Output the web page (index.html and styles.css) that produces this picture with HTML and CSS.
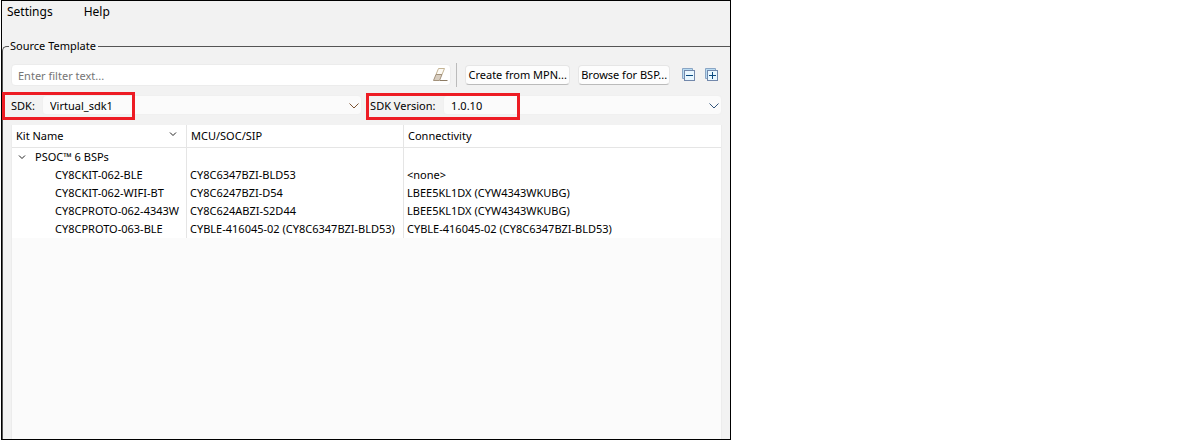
FILE: index.html
```html
<!DOCTYPE html>
<html lang="en">
  <head>
    <meta charset="UTF-8" />
    <title>Project Creator - Choose Board Support Package</title>
    <meta name="viewport" content="width=device-width, initial-scale=1.0" />
    <link rel="stylesheet" href="styles.css">
  </head>

  <body>
    <div class="window">
      <nav class="menu-bar">
        <button type="button">Settings</button>
        <button type="button">Help</button>
      </nav>

      <fieldset class="source-template">
        <legend>Source Template</legend>

        <div class="toolbar">
          <div class="filter">
            <input type="text" placeholder="Enter filter text..." aria-label="Filter" />
            <button type="button" class="clear-btn" aria-label="Clear filter">
              <svg width="16" height="16" viewBox="0 0 16 16">
                <path d="M6.5 1.5H12.5L10 7.5H4Z" fill="#fdfaf4" stroke="#c4b495" />
                <path d="M4 7.5H10L7.5 13.5H1.5Z" fill="#d8cdbf" stroke="#a3927b" />
                <path d="M8 13.5H15.5" stroke="#8d7b64" />
              </svg>
            </button>
          </div>
          <div class="separator"></div>
          <button type="button" class="push-btn">Create from MPN...</button>
          <button type="button" class="push-btn">Browse for BSP...</button>
          <div class="tree-tools">
            <button type="button" aria-label="Collapse all">
              <svg width="14" height="14" viewBox="0 0 14 14">
                <path d="M.5 10.5V.5H10.5V2.5H2.5V10.5Z" fill="#b9dcf3" stroke="#8aa5c4" />
                <rect x="2.5" y="2.5" width="10" height="10" fill="#e9f7ff" stroke="#7288ab" />
                <path d="M4 7.5H11" stroke="#0b4a80" />
              </svg>
            </button>
            <button type="button" aria-label="Expand all">
              <svg width="14" height="14" viewBox="0 0 14 14">
                <path d="M.5 10.5V.5H10.5V2.5H2.5V10.5Z" fill="#b9dcf3" stroke="#8aa5c4" />
                <rect x="2.5" y="2.5" width="10" height="10" fill="#e9f7ff" stroke="#7288ab" />
                <path d="M4 7.5H11M7.5 4V11" stroke="#0b4a80" />
              </svg>
            </button>
          </div>
        </div>

        <div class="sdk-row">
          <div class="field sdk">
            <label for="sdk">SDK:</label>
            <div class="combo">
              <select id="sdk">
                <option>Virtual_sdk1</option>
              </select>
              <svg class="chevron warm" width="10" height="6" viewBox="0 0 10 6"><path d="M.5 .5L5 5L9.5 .5" /></svg>
            </div>
            <span class="highlight"></span>
          </div>
          <div class="field version">
            <label for="version">SDK Version:</label>
            <div class="combo">
              <select id="version">
                <option>1.0.10</option>
              </select>
              <svg class="chevron" width="10" height="6" viewBox="0 0 10 6"><path d="M.5 .5L5 5L9.5 .5" /></svg>
            </div>
            <span class="highlight"></span>
          </div>
        </div>

        <div class="tree">
          <table>
            <colgroup>
              <col class="col-kit" />
              <col class="col-mcu" />
              <col />
            </colgroup>
            <thead>
              <tr>
                <th>
                  <div class="sortable">
                    Kit Name
                    <svg class="twisty" width="8" height="5" viewBox="0 0 8 5"><path d="M1 .5L4 3.5L7 .5" /></svg>
                  </div>
                </th>
                <th>MCU/SOC/SIP</th>
                <th>Connectivity</th>
              </tr>
            </thead>
            <tbody>
              <tr class="group">
                <td>
                  <button type="button" aria-expanded="true">
                    <svg class="twisty" width="8" height="5" viewBox="0 0 8 5"><path d="M1 .5L4 3.5L7 .5" /></svg>
                    PSOC™ 6 BSPs
                  </button>
                </td>
                <td></td>
                <td></td>
              </tr>
              <tr>
                <td>CY8CKIT-062-BLE</td>
                <td>CY8C6347BZI-BLD53</td>
                <td>&lt;none&gt;</td>
              </tr>
              <tr>
                <td>CY8CKIT-062-WIFI-BT</td>
                <td>CY8C6247BZI-D54</td>
                <td>LBEE5KL1DX (CYW4343WKUBG)</td>
              </tr>
              <tr>
                <td>CY8CPROTO-062-4343W</td>
                <td>CY8C624ABZI-S2D44</td>
                <td>LBEE5KL1DX (CYW4343WKUBG)</td>
              </tr>
              <tr>
                <td>CY8CPROTO-063-BLE</td>
                <td>CYBLE-416045-02 (CY8C6347BZI-BLD53)</td>
                <td>CYBLE-416045-02 (CY8C6347BZI-BLD53)</td>
              </tr>
            </tbody>
          </table>
        </div>
      </fieldset>
    </div>
  </body>
</html>
```
FILE: styles.css
```css
* {
  box-sizing: border-box;
  margin: 0;
  padding: 0;
}

body {
  font-family: "Noto Sans", "Open Sans", sans-serif;
  font-size: 11px;
  color: #000;
  background: #fff;
}

button,
input,
select {
  font: inherit;
  color: inherit;
  background: transparent;
  border: none;
}

svg {
  display: block;
}

.window {
  display: flex;
  flex-direction: column;
  width: 60.7%;
  height: calc(100vh - 1px);
  margin-left: 1px;
  border: 1px solid #000;
  background: #f2f2f2;
  overflow: hidden;
}

.menu-bar {
  display: flex;
  gap: 31px;
  padding: 0 5px;
  font-size: 12px;
  line-height: 22px;
  margin-bottom: 14px;
}

.source-template {
  flex: 1;
  display: flex;
  flex-direction: column;
  min-width: 0;
  padding: 8px 8px 0 8px;
  border: 1px solid #555;
  border-width: 1px 0 0 1px;
  border-top-left-radius: 5px;
}

.source-template legend {
  margin-left: -2px;
  padding: 0 2px 0 1px;
  line-height: 18px;
}

.toolbar {
  display: flex;
  align-items: center;
  height: 24px;
}

.filter {
  flex: 1;
  display: flex;
  align-items: center;
  height: 22px;
  padding-right: 2px;
  background: #fff;
  border: 1px solid #ececec;
  border-radius: 4px;
}

.filter input {
  flex: 1;
  min-width: 0;
  padding-left: 6px;
  outline: none;
}

.filter input::placeholder {
  color: #757575;
}

.separator {
  width: 1px;
  height: 24px;
  margin: 0 8px 0 5px;
  background: #bbb;
}

.push-btn {
  width: 105px;
  height: 20px;
  line-height: 18px;
  white-space: nowrap;
  background: #fdfdfd;
  border: 1px solid #e6e6e6;
  border-bottom-color: #bbb;
  border-radius: 4px;
}

.push-btn + .push-btn {
  width: 92px;
  margin-left: 8px;
}

.tree-tools {
  display: flex;
  gap: 9px;
  padding: 0 3px 0 12px;
}

.sdk-row {
  display: flex;
  gap: 8px;
  margin-top: 8px;
}

.field {
  position: relative;
  display: flex;
  align-items: center;
  height: 20px;
}

.field.sdk {
  flex: 351;
}

.field.sdk label {
  width: 31px;
}

.field.version {
  flex: 352;
}

.field.version label {
  width: 73px;
  white-space: nowrap;
}

.combo {
  position: relative;
  flex: 1;
}

.combo select {
  display: block;
  width: 100%;
  height: 20px;
  padding: 0 20px 0 7px;
  appearance: none;
  background: #fbfbfb;
  border: 1px solid #f0f0f0;
  border-radius: 4px;
}

.chevron {
  position: absolute;
  top: 8px;
  right: 3px;
  fill: none;
  stroke: #33567c;
  pointer-events: none;
}

.chevron.warm {
  stroke: #7c5333;
}

/* callout frames over the two SDK fields */
.highlight {
  position: absolute;
  border: 3px solid #ed1c24;
  pointer-events: none;
}

.sdk .highlight {
  top: -3px;
  left: -9px;
  width: 133px;
  height: 28px;
}

.version .highlight {
  top: -2px;
  left: -4px;
  width: 154px;
  height: 27px;
}

.tree {
  flex: 1;
  margin-top: 10px;
  background: #fbfbfb;
  border: 1px solid #ececec;
  border-width: 0 1px;
}

table {
  width: 100%;
  table-layout: fixed;
  border-collapse: separate;
  border-spacing: 0;
  background: #fff;
}

.col-kit {
  width: 175px;
}

.col-mcu {
  width: 217px;
}

th,
td {
  height: 18px;
  line-height: 18px;
  text-align: left;
  font-weight: 400;
  white-space: nowrap;
  border-right: 1px solid #e5e5e5;
}

th:last-child,
td:last-child {
  border-right: none;
}

th {
  height: 23px;
  padding: 0 9px 0 4px;
  border-bottom: 1px solid #e5e5e5;
}

.sortable {
  display: flex;
  justify-content: space-between;
}

.sortable .twisty {
  margin-top: 5px;
}

td {
  padding-left: 3px;
}

td:first-child {
  padding-left: 43px;
}

.group td:first-child {
  padding-left: 6px;
}

.group button {
  display: flex;
  align-items: center;
  gap: 9px;
  line-height: 18px;
}

.twisty {
  fill: none;
  stroke: #222;
}
```
